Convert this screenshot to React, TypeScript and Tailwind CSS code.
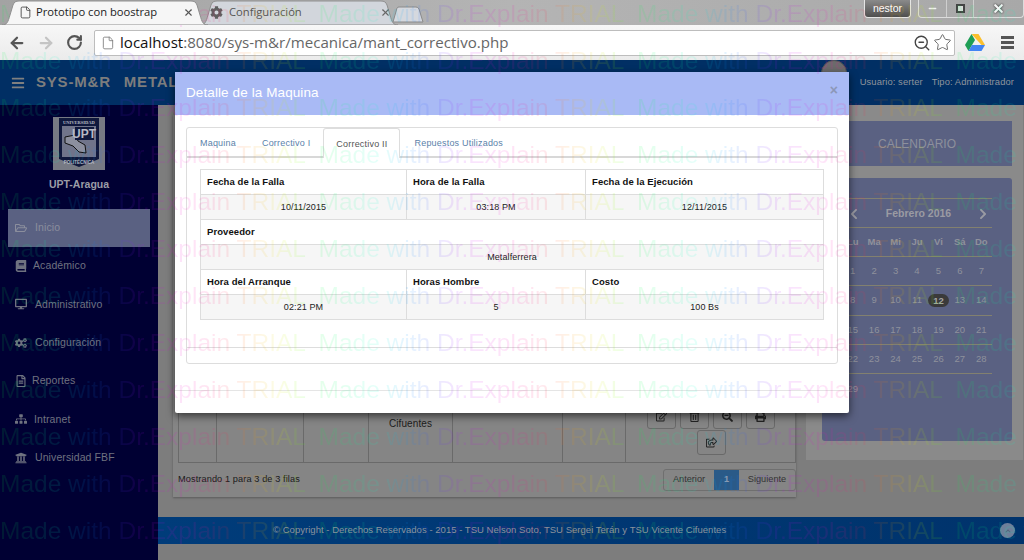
import React from "react";
import { ArrowLeft, ArrowRight, RotateCw, File, ZoomOut, Star, X, Minus } from "lucide-react";
import { FaCog, FaRegFolderOpen, FaBook, FaDesktop, FaCogs, FaRegFileAlt, FaSitemap, FaUniversity, FaBars, FaRegEdit, FaRegTrashAlt, FaSearchMinus, FaPrint, FaRegShareSquare, FaChevronLeft, FaChevronRight, FaChevronUp } from "react-icons/fa";

const sans = "font-['Liberation_Sans',Arial,sans-serif]";

function TabShape({ fill, stroke, w }: { fill: string; stroke: string; w: number }) {
  return (
    <svg className="absolute left-0 top-0" width={w} height={25} viewBox={`0 0 ${w} 25`}>
      <path d={`M0 25 C5 25 6 22 8 15 L11 5 C12 2 14 1 17 1 L${w - 17} 1 C${w - 14} 1 ${w - 12} 2 ${w - 11} 5 L${w - 8} 15 C${w - 6} 22 ${w - 5} 25 ${w} 25 Z`} fill={fill} stroke={stroke} strokeWidth="1" />
    </svg>
  );
}

function ChromeBar() {
  return (
    <div className="h-[60px] shrink-0 flex flex-col font-['Open_Sans',sans-serif]">
      <div className="relative h-[25px] flex bg-[linear-gradient(90deg,#a3a3a3,#b4b4b4_50%,#a8a8a8)] pl-[2px]">
        <div className="relative w-[206px] h-[25px] z-10 flex items-center">
          <TabShape fill="#f6f6f6" stroke="#8f8f8f" w={206} />
          <File size={13} strokeWidth={1.6} className="relative ml-[17px] text-[#444]" />
          <span className="relative ml-[4px] w-[124px] whitespace-nowrap text-[11.200px] text-[#222]">Prototipo con boostrap</span>
          <X size={11} strokeWidth={2.4} className="relative ml-[23px] text-[#555]" />
        </div>
        <div className="relative w-[198px] h-[25px] -ml-[8px] flex items-center">
          <TabShape fill="#d2d6dc" stroke="#8f8f8f" w={198} />
          <FaCog size={13} className="relative ml-[10px] text-[#5f5f5f]" />
          <span className="relative ml-[6px] w-[76px] text-[11.200px] text-[#555]">Configuración</span>
          <X size={11} strokeWidth={2.4} className="relative ml-[75px] text-[#666]" />
        </div>
        <div className="relative w-[32px] h-[17px] mt-[6px] -ml-[6px]">
          <svg width="32" height="17" viewBox="0 0 32 17"><path d="M1 16 L5 2 Q5.500 1 7 1 L24 1 Q26 1 27 3 L31 16 Z" fill="#d5d8de" stroke="#8a8a8a" /></svg>
        </div>
        <div className="ml-auto flex items-start">
          <div className={`w-[47px] h-[18px] mr-[7px] rounded-b-[4px] border border-t-0 border-[#e5e5e5] bg-[linear-gradient(#8a8a8a,#4f4f4f)] text-[10.500px] leading-[17px] text-center text-white ${sans}`}>nestor</div>
          <div className="w-[106px] h-[18px] rounded-b-[4px] border border-t-0 border-[#dcdcdc] flex">
            <div className="w-[28px] flex items-center justify-center border-r border-[#cfcfcf]"><Minus size={11} strokeWidth={3} className="text-[#f0f0f0]" /></div>
            <div className="w-[27px] flex items-center justify-center border-r border-[#cfcfcf]"><div className="w-[9px] h-[9px] border-2 border-[#444] bg-[#ddd]" /></div>
            <div className="flex-1 flex items-center justify-center"><X size={13} strokeWidth={4} className="text-[#f5f5f5] drop-shadow-[0_0_1px_#222]" /></div>
          </div>
        </div>
      </div>
      <div className="h-[35px] flex items-center bg-[linear-gradient(#f7f7f7,#ebebeb)] pl-[8px]">
        <ArrowLeft size={18} strokeWidth={3} className="text-[#555]" />
        <ArrowRight size={18} strokeWidth={3} className="ml-[11px] text-[#c4c4c4]" />
        <RotateCw size={17} strokeWidth={3} className="ml-[11px] text-[#555]" />
        <div className="ml-[11px] w-[861px] h-[26px] shrink-0 bg-white border border-[#bdbdbd] rounded-[2px] flex items-center pl-[6px]">
          <File size={14} strokeWidth={1.4} className="text-[#777]" />
          <span className="ml-[5px] text-[15.100px] text-[#111]">localhost<span className="text-[#666]">:8080/sys-m&amp;r/mecanica/mant_correctivo.php</span></span>
          <ZoomOut size={18} strokeWidth={1.8} className="ml-auto text-[#444]" />
          <Star size={19} strokeWidth={1.2} className="ml-[2px] mr-[2px] text-[#666]" />
        </div>
        <svg width="20" height="18" viewBox="0 0 20 18" className="ml-[10px]">
          <path d="M6.500 0 L13.500 0 L20 11 L16.500 11 Z" fill="#fbc02d" />
          <path d="M6.500 0 L0 11 L3.500 17 L10 6 Z" fill="#1e9e55" />
          <path d="M3.500 17 L16.500 17 L20 11 L7 11 Z" fill="#4285f4" />
        </svg>
        <div className="ml-[16px] w-[13px] flex flex-col gap-[2px]">
          <div className="h-[3px] bg-[#555]" /><div className="h-[3px] bg-[#555]" /><div className="h-[3px] bg-[#555]" />
        </div>
      </div>
    </div>
  );
}

function Navbar() {
  return (
    <div className={`h-[45px] shrink-0 bg-[#012f64] flex items-center pl-[11px] ${sans}`}>
      <FaBars size={14} className="text-[#808080]" />
      <span className="ml-[11px] text-[15px] font-bold tracking-[0.8px] text-[#7d7d7d]">SYS-M&amp;R</span>
      <span className="ml-[13px] text-[15px] font-bold tracking-[0.8px] text-[#7d7d7d]">METALFERRERA</span>
      <div className="ml-auto w-[26px] h-[26px] -mt-[19px] rounded-full bg-[#6b6b6b] border border-[#555]" />
      <span className="ml-[13px] text-[9.400px] tracking-[0.1px] text-[#8f949c]">Usuario: serter</span>
      <span className="ml-[9px] mr-[10px] text-[9.400px] tracking-[0.1px] text-[#8f949c]">Tipo: Administrador</span>
    </div>
  );
}

const menu: [React.ComponentType<{ size?: number; className?: string }>, string, string][] = [
  [FaRegFolderOpen, "Inicio", "ml-[8px]"],
  [FaBook, "Académico", "ml-[6px]"],
  [FaDesktop, "Administrativo", "ml-[8px]"],
  [FaCogs, "Configuración", "ml-[8px]"],
  [FaRegFileAlt, "Reportes", "ml-[5px]"],
  [FaSitemap, "Intranet", "ml-[7px]"],
  [FaUniversity, "Universidad FBF", "ml-[8px]"],
];

function Logo() {
  return (
    <svg width="52" height="53" viewBox="0 0 52 53" className="mx-auto">
      <rect width="52" height="53" fill="#777a84" />
      <path d="M6 1 L46 1 L46 42 L26 50 L6 42 Z" fill="#10183c" />
      <path d="M9 9 L43 9 L43 40 L9 40 Z" fill="#70748a" />
      <path d="M12 20 L22 18 L25 24 L32 28 L33 36 L26 35 L20 29 L12 26 Z" fill="#8c8f9e" stroke="#111" strokeWidth="1" />
      <rect x="22" y="10" width="19" height="13" fill="#10183c" />
      <text x="31" y="21" textAnchor="middle" fontSize="12" fontWeight="bold" fill="#b7bac4" fontFamily="Liberation Sans">UPT</text>
      <text x="26" y="7" textAnchor="middle" fontSize="4.500" fontWeight="bold" fill="#b7bac4" fontFamily="Liberation Serif">UNIVERSIDAD</text>
      <text x="26" y="47" textAnchor="middle" fontSize="4.500" fontWeight="bold" fill="#b7bac4" fontFamily="Liberation Sans">POLITÉCNICA</text>
    </svg>
  );
}

function Sidebar() {
  return (
    <div className={`w-[158px] shrink-0 bg-[#000033] flex flex-col pt-[12px] ${sans}`}>
      <Logo />
      <div className="mt-[7px] text-center text-[10.500px] font-bold text-[#9b9da6]">UPT-Aragua</div>
      <div className="mt-[16px] flex flex-col">
        {menu.map(([Icon, label, ml], i) => (
          <div key={label} className={`h-[38.300px] flex items-center ${i === 0 ? "mx-[8px] pl-[7px] bg-[#5a6182] text-[#8b8e9d]" : "pl-[15px] text-[#6f7280]"}`}>
            <Icon size={12} className="shrink-0" />
            <span className={`${ml} text-[10.500px] tracking-[0.1px]`}>{label}</span>
          </div>
        ))}
      </div>
    </div>
  );
}

function ActionBtn({ children }: { children: React.ReactNode }) {
  return <div className="w-[29px] h-[25px] flex items-center justify-center rounded-[3px] border border-[#696969] text-[#222]">{children}</div>;
}

function LeftCard() {
  const cols = ["w-[38px]", "w-[87px]", "w-[65px]", "w-[84px]", "w-[110px]", "w-[63px]", "flex-1"];
  return (
    <div className={`ml-[15px] mt-[10px] w-[623px] h-[382px] bg-[#858585] shadow-[0_1px_2px_#5a5a5a] flex flex-col pl-[5px] ${sans}`}>
      <div className="h-[348px] flex border-x border-b border-[#6a6a6a] text-[9px] text-[#1c1c1c]">
        {cols.map((c, i) => (
          <div key={i} className={`${c} flex flex-col items-center justify-end pb-[33px] ${i < 6 ? "border-r border-[#6a6a6a]" : ""}`}>
            {i === 3 && <span className="text-[10px] tracking-[0.1px] -mb-[2px]">Cifuentes</span>}
            {i === 6 && (
              <div className="w-full flex flex-col items-center -mb-[26px] gap-[1px] pl-[1px]">
                <div className="flex gap-[4px]">
                  <ActionBtn><FaRegEdit size={11} /></ActionBtn>
                  <ActionBtn><FaRegTrashAlt size={11} /></ActionBtn>
                  <ActionBtn><FaSearchMinus size={11} /></ActionBtn>
                  <ActionBtn><FaPrint size={11} /></ActionBtn>
                </div>
                <ActionBtn><FaRegShareSquare size={11} /></ActionBtn>
              </div>
            )}
          </div>
        ))}
      </div>
      <div className="flex items-center justify-between mt-[6px] text-[9.200px]">
        <span className="text-[#1a1a1a] tracking-[0.1px]">Mostrando 1 para 3 de 3 filas</span>
        <div className="h-[22px] flex border border-[#6f6f6f] rounded-[3px] text-[#333] overflow-hidden">
          <div className="w-[50px] flex items-center justify-center">Anterior</div>
          <div className="w-[25px] flex items-center justify-center bg-[#2a5a88] text-[#8b9bb0] font-bold">1</div>
          <div className="w-[56px] flex items-center justify-center">Siguiente</div>
        </div>
      </div>
    </div>
  );
}

function Calendar() {
  const heads = ["Lu", "Ma", "Mi", "Ju", "Vi", "Sá", "Do"];
  const weeks = [
    ["1", "2", "3", "4", "5", "6", "7"],
    ["8", "9", "10", "11", "12", "13", "14"],
    ["15", "16", "17", "18", "19", "20", "21"],
    ["22", "23", "24", "25", "26", "27", "28"],
    ["29", "", "", "", "", "", ""],
  ];
  return (
    <div className={`ml-[10px] w-[217px] h-[355px] bg-[#8a8a8a] pl-[16px] pr-[11px] flex flex-col ${sans}`}>
      <div className="mt-[16px] h-[45px] bg-[#5a6182] flex items-center justify-center text-[12px] text-[#8d909c]">CALENDARIO</div>
      <div className="mt-[12px] h-[263px] bg-[#5a6182] rounded-[3px] pt-[20px] px-[20px] text-[#8f919c]">
        <div className="h-[30px] border-y border-[#82806f] flex items-center justify-between text-[#9a9ba3] pt-[1px]">
          <FaChevronLeft size={12} className="ml-[6px]" />
          <span className="text-[10.500px] font-bold">Febrero 2016</span>
          <FaChevronRight size={12} className="mr-[3px]" />
        </div>
        <div className="h-[29px] border-b border-[#82806f] grid grid-cols-7 items-center text-center text-[9.500px] font-bold">
          {heads.map((h) => <span key={h}>{h}</span>)}
        </div>
        {weeks.map((w, i) => (
          <div key={i} className={`h-[29.300px] grid grid-cols-7 items-center text-center text-[9.500px] ${i < 4 ? "border-b border-[#82806f]" : ""}`}>
            {w.map((d, j) => (
              <span key={j} className={d === "12" ? "rounded-full bg-[#3a3a3a] text-[#a5a5a5] font-bold leading-[13px]" : ""}>{d}</span>
            ))}
          </div>
        ))}
      </div>
    </div>
  );
}

function Footer() {
  return (
    <div className={`mb-[16px] h-[27px] shrink-0 flex items-center bg-[linear-gradient(90deg,#003c7a,#00336c)] pl-[115px] pr-[9px] text-[9.500px] tracking-[0.03px] text-[#8b929c] ${sans}`}>
      <span>© Copyright - Derechos Reservados - 2015 - TSU Nelson Soto, TSU Sergei Terán y TSU Vicente Cifuentes</span>
      <div className="ml-auto w-[15px] h-[15px] rounded-full bg-[#6f7f9a] flex items-center justify-center"><FaChevronUp size={6} className="text-[#55657c]" /></div>
    </div>
  );
}

const th = "border border-[#dddddd] px-[6px] text-left font-bold text-[9.500px] tracking-[0.08px] h-[25px] text-[#111]";
const td = "border border-[#dddddd] text-center text-[9px] tracking-[0.1px] bg-[#f6f6f6] h-[25px] text-[#222] pt-[2px]";

function Modal() {
  const tabs = ["Maquina", "Correctivo I", "Correctivo II", "Repuestos Utilizados"];
  return (
    <div className={`absolute left-[175px] top-[12px] w-[674px] h-[341px] bg-white rounded-[2px] shadow-[0_3px_9px_rgba(0,0,0,0.6)] flex flex-col ${sans}`}>
      <div className="h-[43px] shrink-0 bg-[#a9baf5] flex items-center justify-between px-[11px]">
        <span className="text-[13.500px] text-white tracking-[0.1px]">Detalle de la Maquina</span>
        <span className="text-[14px] font-bold text-[#8c97b8] -mt-[6px]">×</span>
      </div>
      <div className="mx-[11px] mt-[12px] h-[237px] border border-[#dddddd] rounded-[3px] flex flex-col">
        <div className="h-[30px] shrink-0 flex items-end pl-[1px] border-b-[2px] border-[#d8d8d8] text-[9px] tracking-[0.2px] text-[#5b82aa]">
          {tabs.map((t, i) => (
            <div key={t} className={`flex items-center ${i === 2 ? "h-[30px] pt-[2px] px-[12px] border border-b-0 border-[#dddddd] rounded-t-[3px] bg-white -mb-[2px] text-[#555]" : i === 0 ? "h-[28px] pt-[4px] pl-[12px] pr-[13px]" : i === 3 ? "h-[28px] pt-[4px] pl-[14px]" : "h-[28px] pt-[4px] px-[13px]"}`}>{t}</div>
          ))}
        </div>
        <div className="mx-[13px] mt-[11px]">
          <table className="w-[624px] border-collapse table-fixed">
            <tbody>
              <tr><th className={`${th} w-[206px]`}>Fecha de la Falla</th><th className={`${th} w-[179px]`}>Hora de la Falla</th><th className={th}>Fecha de la Ejecución</th></tr>
              <tr><td className={td}>10/11/2015</td><td className={td}>03:18 PM</td><td className={td}>12/11/2015</td></tr>
              <tr><th className={th} colSpan={3}>Proveedor</th></tr>
              <tr><td className={td} colSpan={3}>Metalferrera</td></tr>
              <tr><th className={th}>Hora del Arranque</th><th className={th}>Horas Hombre</th><th className={th}>Costo</th></tr>
              <tr><td className={td}>02:21 PM</td><td className={td}>5</td><td className={td}>100 Bs</td></tr>
            </tbody>
          </table>
          <div className="mt-[27px] -mx-[13px] border-t border-[#dddddd]" />
        </div>
      </div>
      <div className="mt-[26px] border-t border-[#e5e5e5]" />
    </div>
  );
}

const wmRows = Array.from({ length: 12 }, (_, i) => i);
const wmTiles = [0, 1, 2, 3];

function Watermark() {
  return (
    <div className={`absolute inset-0 overflow-hidden pointer-events-none opacity-[0.1] ${sans}`}>
      <div className="-mt-[10px]">
        {wmRows.map((r) => (
          <div key={r} className="h-[47px] flex">
            {wmTiles.map((t) => (
              <span key={t} className="w-[318.500px] shrink-0 whitespace-nowrap text-[24.500px] leading-[47px] text-transparent bg-clip-text bg-[linear-gradient(90deg,#00ff40_0px,#00ffd0_60px,#00a0ff_85px,#4040ff_115px,#c000ff_145px,#ff00c0_190px,#ff2050_225px,#ff9000_250px,#e0f000_280px,#80ff00_297px,#00ff40_318px)]">Made with Dr.Explain TRIAL</span>
            ))}
          </div>
        ))}
      </div>
    </div>
  );
}

export default function App() {
  return (
    <div className="relative w-[1024px] h-[560px] overflow-hidden flex flex-col bg-[#7d7d7d]">
      <ChromeBar />
      <div className="relative flex-1 flex flex-col min-h-0">
        <Navbar />
        <div className="flex-1 flex min-h-0">
          <Sidebar />
          <div className="flex-1 flex flex-col min-w-0">
            <div className="flex-1 flex items-start min-h-0">
              <LeftCard />
              <Calendar />
            </div>
            <Footer />
          </div>
        </div>
        <Modal />
      </div>
      <Watermark />
    </div>
  );
}
